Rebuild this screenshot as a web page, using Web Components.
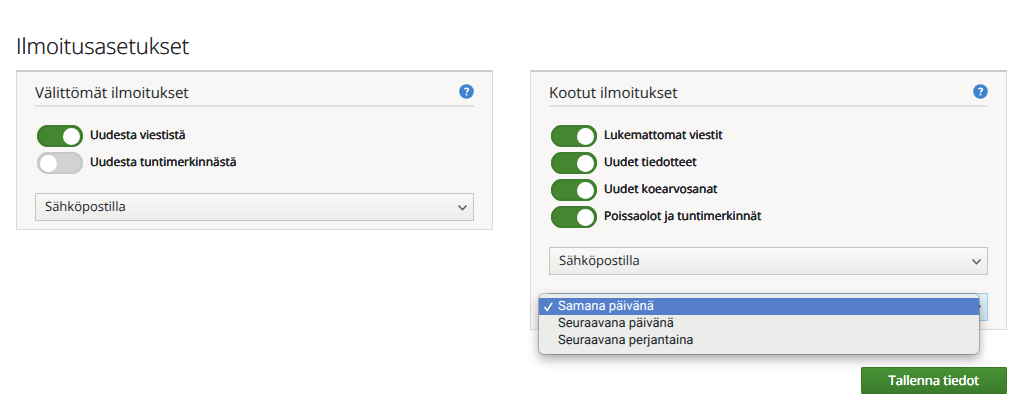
<!DOCTYPE html>
<html lang="fi">
<head>
<meta charset="utf-8">
<meta name="viewport" content="width=device-width, initial-scale=1">
<title>Ilmoitusasetukset</title>
<style>
  body {
    margin: 0;
    background: #fff;
    color: #22262a;
    font-family: "Open Sans", "Noto Sans", sans-serif;
    text-rendering: geometricPrecision;
  }
</style>
</head>
<body>
<notification-settings>
  <span slot="title">Ilmoitusasetukset</span>
  <settings-panel heading="Välittömät ilmoitukset">
    <toggle-switch checked>Uudesta viestistä</toggle-switch>
    <toggle-switch>Uudesta tuntimerkinnästä</toggle-switch>
    <select-field slot="fields" label="Toimitustapa" options="Sähköpostilla"></select-field>
  </settings-panel>
  <settings-panel heading="Kootut ilmoitukset">
    <toggle-switch checked>Lukemattomat viestit</toggle-switch>
    <toggle-switch checked>Uudet tiedotteet</toggle-switch>
    <toggle-switch checked>Uudet koearvosanat</toggle-switch>
    <toggle-switch checked>Poissaolot ja tuntimerkinnät</toggle-switch>
    <select-field slot="fields" label="Toimitustapa" options="Sähköpostilla"></select-field>
    <select-field slot="fields" label="Ajankohta" options="Samana päivänä|Seuraavana päivänä|Seuraavana perjantaina" open></select-field>
  </settings-panel>
  <save-button slot="actions">Tallenna tiedot</save-button>
</notification-settings>

<script>
(function () {
  function makeTemplate(html) {
    const template = document.createElement('template');
    template.innerHTML = html;
    return template;
  }

  const pageTemplate = makeTemplate(`
    <style>
      :host {
        display: block;
        padding: 30px 16px 0;
      }
      h1 {
        margin: 0 0 8px;
        font-size: 22px;
        line-height: 32px;
        font-weight: 300;
        text-shadow: 0 0 0 currentColor;
      }
      .columns {
        display: grid;
        grid-template-columns: 1fr 1fr;
        align-items: start;
        gap: 37px;
      }
      footer {
        display: flex;
        justify-content: flex-end;
        margin-top: 37px;
      }
    </style>
    <main>
      <h1><slot name="title"></slot></h1>
      <div class="columns"><slot></slot></div>
      <footer><slot name="actions"></slot></footer>
    </main>
  `);

  customElements.define('notification-settings', class NotificationSettings extends HTMLElement {
    constructor() {
      super();
      this.attachShadow({ mode: 'open' });
      this.shadowRoot.appendChild(pageTemplate.content.cloneNode(true));
    }
  });

  const panelTemplate = makeTemplate(`
    <style>
      :host {
        display: block;
        padding: 10px 18px 8px;
        border: 1px solid #dbdcd8;
        border-top: 2px solid #cbccc9;
        background: #f8f7f5;
      }
      header {
        display: flex;
        justify-content: space-between;
        align-items: flex-start;
        border-bottom: 2px solid #e1e1dd;
      }
      h2 {
        margin: 0;
        font-size: 15px;
        line-height: 23px;
        font-weight: 400;
      }
      .help {
        padding: 2px 0 0;
        border: none;
        background: none;
        cursor: pointer;
      }
      svg {
        display: block;
      }
      .toggles {
        display: flex;
        flex-direction: column;
        gap: 5px;
        padding: 18px 2px 0;
      }
      .fields {
        display: flex;
        flex-direction: column;
        gap: 18px;
        margin-top: 19px;
      }
    </style>
    <header>
      <h2></h2>
      <button class="help" type="button" aria-label="Ohje">
        <svg width="15" height="15" viewBox="0 0 15 15" aria-hidden="true">
          <circle cx="7.5" cy="7.5" r="7.3" fill="#3f82cf"/>
          <path d="M5.5 5.2C6 4.5 6.7 4.2 7.5 4.2c1.1 0 1.9.6 1.9 1.5 0 1.3-1.8 1.3-1.8 2.8" fill="none" stroke="#fff" stroke-width="1.6"/>
          <circle cx="7.5" cy="10.6" r="1" fill="#fff"/>
        </svg>
      </button>
    </header>
    <div class="toggles"><slot></slot></div>
    <div class="fields"><slot name="fields"></slot></div>
  `);

  customElements.define('settings-panel', class SettingsPanel extends HTMLElement {
    constructor() {
      super();
      this.attachShadow({ mode: 'open' });
      this.shadowRoot.appendChild(panelTemplate.content.cloneNode(true));
    }

    connectedCallback() {
      this.shadowRoot.querySelector('h2').textContent = this.getAttribute('heading');
    }
  });

  const toggleTemplate = makeTemplate(`
    <style>
      :host {
        display: flex;
      }
      label {
        display: flex;
        align-items: center;
        gap: 7px;
        font-size: 12px;
        line-height: 20px;
        font-weight: 500;
        text-shadow: 0 0 0 currentColor, 0 0 0 currentColor;
        cursor: pointer;
      }
      input {
        appearance: none;
        display: flex;
        align-items: center;
        box-sizing: border-box;
        width: 46px;
        height: 22px;
        margin: 0;
        padding: 0 3px;
        border-radius: 11px;
        background: #d2d3d0;
        box-shadow: inset 0 0 0 2px #c8c9c6;
        cursor: pointer;
      }
      input::before {
        content: "";
        width: 17px;
        height: 17px;
        border-radius: 50%;
        background: #fff;
      }
      input:checked {
        justify-content: flex-end;
        background: #448730;
        box-shadow: inset 0 0 0 2px #3f7d30;
      }
      .text {
        padding-bottom: 2px;
      }
    </style>
    <label><input type="checkbox" role="switch"><span class="text"><slot></slot></span></label>
  `);

  customElements.define('toggle-switch', class ToggleSwitch extends HTMLElement {
    constructor() {
      super();
      this.attachShadow({ mode: 'open' });
      this.shadowRoot.appendChild(toggleTemplate.content.cloneNode(true));
    }

    connectedCallback() {
      this.shadowRoot.querySelector('input').checked = this.hasAttribute('checked');
    }
  });

  const selectTemplate = makeTemplate(`
    <style>
      :host {
        display: block;
        position: relative;
      }
      select {
        appearance: none;
        display: block;
        box-sizing: border-box;
        width: 100%;
        height: 28px;
        padding: 0 30px 2px 9px;
        border: 1px solid #c4c6c5;
        border-radius: 0;
        background: linear-gradient(#f9f9f8, #ececeb);
        color: inherit;
        font-family: inherit;
        font-size: 13px;
        text-rendering: inherit;
      }
      .arrow {
        position: absolute;
        top: 11px;
        right: 6px;
        pointer-events: none;
      }
      [role="listbox"] {
        display: none;
      }
      :host([open]) select {
        border-color: #9dcbed;
        background: linear-gradient(#e3f4fb, #d2e9f3);
      }
      /* Menu reaches past the field so its labels line up with the field text */
      :host([open]) [role="listbox"] {
        display: block;
        position: absolute;
        z-index: 1;
        top: 1px;
        left: -10px;
        right: 9px;
        margin: 0;
        padding: 4px 0 5px;
        border-radius: 5px;
        background: #ececeb;
        box-shadow: 0 0 0 1px rgba(0, 0, 0, 0.22), 0 5px 12px rgba(0, 0, 0, 0.35);
        list-style: none;
        font-family: Roboto, "Open Sans", sans-serif;
        font-size: 13px;
        line-height: 17px;
      }
      [role="option"] {
        display: flex;
        align-items: center;
        cursor: default;
      }
      .mark {
        display: flex;
        justify-content: center;
        width: 19px;
      }
      .mark svg {
        visibility: hidden;
      }
      [aria-selected="true"] {
        background: #557fcb;
        color: #fff;
      }
      [aria-selected="true"] svg {
        visibility: visible;
      }
    </style>
    <select></select>
    <svg class="arrow" width="11" height="8" viewBox="0 0 11 8" aria-hidden="true">
      <path d="M1.5 1.5 5.5 5.7 9.5 1.5" fill="none" stroke="#555a5c" stroke-width="1.5"/>
    </svg>
    <ul role="listbox"></ul>
  `);

  const checkMark = `
    <span class="mark">
      <svg width="9" height="10" viewBox="0 0 9 10" aria-hidden="true">
        <path d="M1 5.5 3.3 8.4 7.7 1.3" fill="none" stroke="#fff" stroke-width="1.6" stroke-linecap="round" stroke-linejoin="round"/>
      </svg>
    </span>
  `;

  customElements.define('select-field', class SelectField extends HTMLElement {
    constructor() {
      super();
      this.attachShadow({ mode: 'open' });
      this.shadowRoot.appendChild(selectTemplate.content.cloneNode(true));
      this._select = this.shadowRoot.querySelector('select');
      this._menu = this.shadowRoot.querySelector('[role="listbox"]');
    }

    connectedCallback() {
      const options = this.getAttribute('options').split('|');
      this._select.setAttribute('aria-label', this.getAttribute('label'));
      this._menu.setAttribute('aria-label', this.getAttribute('label'));
      this._select.replaceChildren(...options.map((text) => new Option(text)));
      if (this.hasAttribute('open')) {
        this._renderMenu(options);
      }
    }

    _renderMenu(options) {
      this._menu.replaceChildren(...options.map((text, index) => {
        const item = document.createElement('li');
        item.setAttribute('role', 'option');
        item.setAttribute('aria-selected', String(index === this._select.selectedIndex));
        item.innerHTML = checkMark;
        item.append(text);
        item.addEventListener('click', () => this._choose(index));
        return item;
      }));
    }

    _choose(index) {
      this._select.selectedIndex = index;
      this.removeAttribute('open');
    }
  });

  const saveTemplate = makeTemplate(`
    <style>
      :host {
        display: block;
      }
      button {
        padding: 3px 28px 4px;
        border: none;
        border-radius: 2px;
        background: linear-gradient(#489334, #3a7a2c);
        box-shadow: inset 0 0 0 1px #38782b;
        color: #fff;
        font-family: inherit;
        font-size: 13px;
        line-height: 20px;
        font-weight: 500;
        text-rendering: inherit;
        text-shadow: 0 0 0 currentColor, 0 0 0 currentColor;
        cursor: pointer;
      }
    </style>
    <button type="button"><slot></slot></button>
  `);

  customElements.define('save-button', class SaveButton extends HTMLElement {
    constructor() {
      super();
      this.attachShadow({ mode: 'open' });
      this.shadowRoot.appendChild(saveTemplate.content.cloneNode(true));
    }
  });
})();
</script>
</body>
</html>
